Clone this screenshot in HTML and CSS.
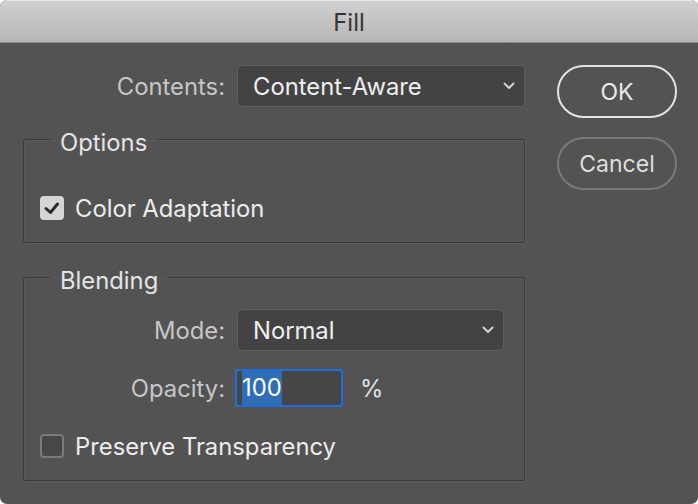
FILE: index.html
```html
<!DOCTYPE html>
<html>
<head>
<meta charset="utf-8">
<link rel="stylesheet" href="styles.css">
</head>
<body>
<div class="window">
  <div class="titlebar">Fill</div>
  <div class="content">
    <div class="main">
      <div class="row contents-row">
        <span class="label">Contents:</span>
        <div class="select select-wide">
          <span class="value">Content-Aware</span>
          <svg class="chev" width="12" height="8" viewBox="0 0 12 8"><polyline points="1.5,1.5 6,6 10.5,1.5" fill="none" stroke="#d8d8d8" stroke-width="1.8" stroke-linecap="round" stroke-linejoin="round"/></svg>
        </div>
      </div>
      <fieldset class="group options">
        <legend>Options</legend>
        <div class="check check-first">
          <span class="box box-checked">
            <svg width="24" height="24" viewBox="0 0 24 24"><polyline points="6,12.5 10.5,16.5 17.5,8" fill="none" stroke="#2b2b2b" stroke-width="3" stroke-linecap="round" stroke-linejoin="round"/></svg>
          </span>
          <span class="check-text">Color Adaptation</span>
        </div>
      </fieldset>
      <fieldset class="group blending">
        <legend>Blending</legend>
        <div class="row mode-row">
          <span class="label label-inner">Mode:</span>
          <div class="select select-mode">
            <span class="value">Normal</span>
            <svg class="chev" width="12" height="8" viewBox="0 0 12 8"><polyline points="1.5,1.5 6,6 10.5,1.5" fill="none" stroke="#d8d8d8" stroke-width="1.8" stroke-linecap="round" stroke-linejoin="round"/></svg>
          </div>
        </div>
        <div class="row opacity-row">
          <span class="label label-inner label-opacity">Opacity:</span>
          <div class="num"><span class="selected">100</span></div>
          <span class="pct">%</span>
        </div>
        <div class="check check-last">
          <span class="box box-empty"></span>
          <span class="check-text">Preserve Transparency</span>
        </div>
      </fieldset>
    </div>
    <div class="buttons">
      <div class="btn btn-ok">OK</div>
      <div class="btn btn-cancel">Cancel</div>
    </div>
  </div>
</div>
</body>
</html>
```
FILE: styles.css
```css
* { box-sizing: border-box; }
html, body { margin: 0; padding: 0; background: #ffffff; }
body {
  font-family: Inter, "Liberation Sans", sans-serif;
  font-size: 23.8px;
  width: 698px;
  height: 504px;
  overflow: hidden;
}
.window {
  width: 698px;
  height: 504px;
  background: #535353;
  border-radius: 7px;
  overflow: hidden;
  display: flex;
  flex-direction: column;
}
.titlebar {
  height: 43px;
  flex: none;
  background: linear-gradient(#d0d0d0, #b6b6b6);
  border-top: 1px solid #e6e6e6;
  border-bottom: 1px solid #8e8e8e;
  color: #353535;
  font-size: 24px;
  display: flex;
  align-items: center;
  justify-content: center;
  padding-top: 1px;
}
.content {
  display: flex;
  padding: 22px 0 0 23px;
  gap: 32px;
}
.main {
  width: 502px;
  display: flex;
  flex-direction: column;
}
.row {
  display: flex;
  align-items: center;
}
.label {
  color: #c6c6c6;
  text-align: right;
  width: 202px;
  flex: none;
  margin-right: 12px;
}
.label-inner { width: 185px; }
.label-opacity { margin-right: 10px; }
.select {
  height: 42px;
  background: #434343;
  border: 1px solid #5f5f5f;
  border-radius: 5px;
  display: flex;
  align-items: center;
  justify-content: space-between;
  padding: 0 9px 0 15px;
  color: #efefef;
}
.select-wide { width: 288px; }
.select-mode { width: 268px; }
.chev { display: block; }
.group {
  margin: 0;
  border: 1px solid #3c3c3c;
  box-shadow: 1px 1px 0 #5c5c5c, inset 1px 1px 0 #5a5a5a;
  border-radius: 2px;
  padding: 0 20px 22px 16px;
  min-width: 0;
}
.group legend {
  margin-left: 10px;
  padding: 0 10px;
  line-height: 33px;
  height: 26px;
  color: #e4e4e4;
}
.options { margin-top: 19px; }
.blending { margin-top: 21px; }
.check {
  display: flex;
  align-items: center;
  height: 24px;
}
.check-first { margin-top: 44px; }
.check-last { margin-top: 27px; }
.box {
  width: 24px;
  height: 24px;
  border-radius: 4px;
  flex: none;
  margin-right: 11px;
}
.box svg { display: block; }
.box-checked { background: #d5d5d5; }
.box-empty { background: #474747; border: 2px solid #7b7b7b; }
.check-text { color: #ececec; }
.mode-row { margin-top: 19px; }
.opacity-row { margin-top: 18px; }
.num {
  width: 108px;
  height: 38px;
  border: 2px solid #1c6fdc;
  background: #464646;
  padding-left: 5px;
  display: flex;
  align-items: center;
}
.selected {
  display: inline-block;
  background: #2f6db4;
  color: #ffffff;
  line-height: 34px;
  height: 34px;
}
.pct {
  color: #e2e2e2;
  margin-left: 17px;
}
.buttons {
  display: flex;
  flex-direction: column;
  gap: 19px;
}
.btn {
  width: 120px;
  height: 53px;
  border-radius: 27px;
  display: flex;
  align-items: center;
  justify-content: center;
  font-size: 23px;
}
.btn-ok { border: 2px solid #e4e4e4; color: #eaeaea; }
.btn-cancel { border: 2px solid #7a7a7a; color: #dedede; }
```
